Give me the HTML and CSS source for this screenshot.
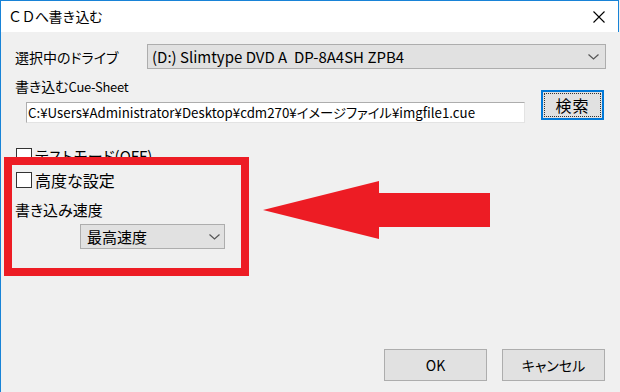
FILE: index.html
```html
<!DOCTYPE html>
<html lang="ja">
<head>
<meta charset="utf-8">
<link rel="stylesheet" href="styles.css">
</head>
<body>
<div class="window">
  <div class="titlebar">
    <span class="title">ＣＤへ書き込む</span>
    <svg class="close" width="12" height="12" viewBox="0 0 12 12"><path d="M0.5 0.5 L11.5 11.5 M11.5 0.5 L0.5 11.5" stroke="#000" stroke-width="1.1" fill="none"/></svg>
  </div>
  <div class="content">
    <div class="row drive-row">
      <span class="label drive-label">選択中のドライブ</span>
      <div class="combo drive-combo">
        <span class="combo-text">(D:) Slimtype DVD A&nbsp; DP-8A4SH ZPB4</span>
        <svg class="chev" width="11" height="6" viewBox="0 0 11 6"><polyline points="0.5,0.5 5.5,5 10.5,0.5" stroke="#555" stroke-width="1.2" fill="none"/></svg>
      </div>
    </div>
    <div class="row cue-row">
      <div class="cue-col">
        <span class="label">書き込む<span class="latin">Cue-Sheet</span></span>
        <div class="input">C:¥Users¥Administrator¥Desktop¥cdm270¥イメージファイル¥imgfile1.cue</div>
      </div>
      <button class="btn search"><span class="focus">検索</span></button>
    </div>
    <label class="check test-check"><span class="box"></span><span class="ctext">テストモード(OFF)</span></label>
    <label class="check adv-check"><span class="box"></span><span class="ctext">高度な設定</span></label>
    <span class="label speed-label">書き込み速度</span>
    <div class="combo speed-combo">
      <span class="combo-text">最高速度</span>
      <svg class="chev" width="11" height="6" viewBox="0 0 11 6"><polyline points="0.5,0.5 5.5,5 10.5,0.5" stroke="#555" stroke-width="1.2" fill="none"/></svg>
    </div>
    <div class="footer">
      <button class="btn action">OK</button>
      <button class="btn action">キャンセル</button>
    </div>
  </div>
  <div class="highlight"></div>
  <svg class="arrow" width="240" height="70" viewBox="0 0 240 70"><polygon points="3,29 119,0 119,12 230,12 230,46 119,46 119,58" fill="#ed1c24"/></svg>
</div>
</body>
</html>
```
FILE: styles.css
```css
* { box-sizing: border-box; }
html, body { margin: 0; padding: 0; }
body {
  width: 620px;
  height: 392px;
  overflow: hidden;
  background: #f0f0f0;
  font-family: "Noto Sans CJK JP", "Noto Sans", sans-serif;
  font-feature-settings: "palt";
  color: #000;
}
.window {
  position: relative;
  width: 619px;
  height: 392px;
  border-left: 1px solid #1883d7;
  display: flex;
  flex-direction: column;
  background: #f0f0f0;
}
.titlebar {
  height: 32px;
  background: #fff;
  border-top: 1px solid #1883d7;
  border-right: 1px solid #1883d7;
  display: flex;
  align-items: center;
  justify-content: space-between;
  padding: 0 13px 0 7px;
}
.title {
  font-size: 14px;
  line-height: 20px;
  margin-top: -1px;
  font-feature-settings: normal;
  letter-spacing: -0.5px;
}
.close { display: block; }
.content {
  flex: 1;
  display: flex;
  flex-direction: column;
  align-items: flex-start;
  padding: 12px 13px 11px 14px;
}
.label { font-size: 14px; line-height: 20px; white-space: nowrap; }
.latin { font-size: 13px; letter-spacing: -0.3px; }
.row { display: flex; }
.drive-row { align-items: center; }
.drive-label { width: 132px; }
.combo {
  height: 25px;
  background: #e1e1e1;
  border: 1px solid #adadad;
  display: flex;
  align-items: center;
  justify-content: space-between;
  padding: 0 6px 0 4px;
  font-size: 14px;
  white-space: nowrap;
}
.drive-combo { width: 459px; font-size: 15px; }
.chev { display: block; }
.cue-row { margin-top: 7px; }
.cue-col { display: flex; flex-direction: column; align-items: flex-start; }
.input {
  margin: 5px 0 0 11px;
  width: 499px;
  height: 21px;
  background: #fff;
  border: 1px solid #7a7a7a;
  border-color: #adadad #e3e3e3 #e3e3e3 #adadad;
  font-size: 13.3px;
  line-height: 19px;
  padding-left: 1px;
  white-space: nowrap;
  overflow: hidden;
}
.btn {
  font-family: inherit;
  font-feature-settings: "palt";
  background: #e1e1e1;
  border: 1px solid #adadad;
  color: #000;
  padding: 0;
  font-size: 14px;
}
.search {
  margin: 14px 0 0 16px;
  width: 63px;
  height: 30px;
  border: 2px solid #0078d7;
  padding: 1px;
}
.focus {
  display: flex;
  width: 100%;
  height: 100%;
  align-items: center;
  justify-content: center;
  border: 1px dotted #333;
  font-size: 16px;
  letter-spacing: 1px;
}
.check { display: flex; align-items: center; font-size: 15px; line-height: 18px; }
.box {
  width: 16px;
  height: 16px;
  background: #fff;
  border: 1px solid #333;
  margin-right: 3px;
}
.test-check { margin-top: 24px; margin-left: 1px; }
.adv-check { margin-top: 6px; margin-left: 1px; font-size: 16px; }
.speed-label { margin-top: 11px; font-size: 15px; }
.speed-combo {
  margin: 4px 0 0 65px;
  width: 145px;
  padding-left: 6px;
  padding-right: 4px;
  font-size: 15px;
}
.footer {
  margin-top: auto;
  align-self: stretch;
  display: flex;
  justify-content: flex-end;
  gap: 15px;
  padding-right: 1px;
}
.action { width: 103px; height: 32px; font-size: 14px; }
.highlight {
  position: absolute;
  left: 3px;
  top: 157px;
  width: 245px;
  height: 119px;
  border: 8px solid #ed1c24;
}
.arrow {
  position: absolute;
  left: 259px;
  top: 181px;
}
```
